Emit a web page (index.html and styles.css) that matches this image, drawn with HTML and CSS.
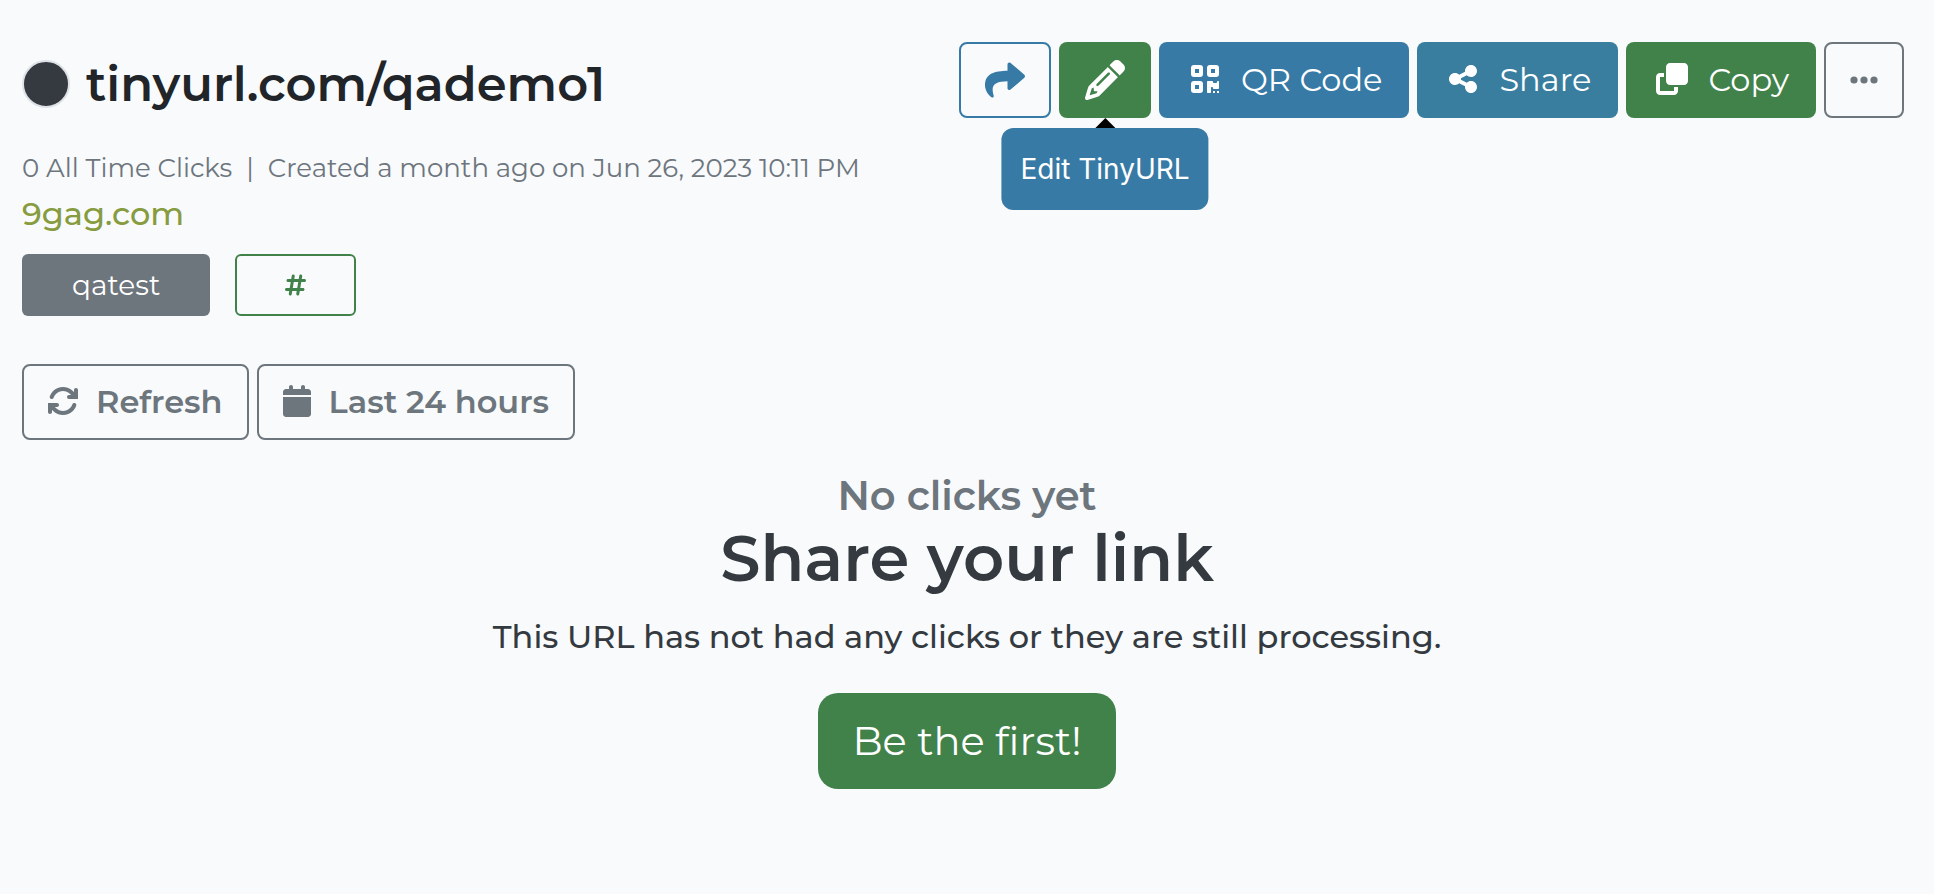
FILE: index.html
```html
<!doctype html>
<html lang="en">
  <head>
    <meta charset="utf-8">
    <meta name="viewport" content="width=device-width, initial-scale=1">
    <title>tinyurl.com/qademo1</title>
    <link rel="stylesheet" href="styles.css">
  </head>
  <body>
    <header class="link-header">
      <h1 class="link-title"><span class="dot"></span>tinyurl.com/qademo1</h1>
      <div class="actions">
        <button type="button" class="btn btn-outline-blue btn-icon" aria-label="Open link">
          <svg class="icon-lg" viewBox="0 0 512 512"><path d="M503.691 189.836L327.687 37.851C312.281 24.546 288 35.347 288 56.015v80.053C127.371 137.907 0 170.1 0 322.326c0 61.441 39.581 122.309 83.333 154.132 13.653 9.931 33.111-2.533 28.077-18.631C66.066 312.814 132.917 274.316 288 272.085V360c0 20.7 24.3 31.453 39.687 18.164l176.004-152c11.071-9.562 11.086-26.753 0-36.328z"/></svg>
        </button>
        <div class="tooltip-anchor">
          <button type="button" class="btn btn-green btn-icon" aria-label="Edit" aria-describedby="editTip">
            <svg class="icon-lg" viewBox="0 0 512 512"><path d="M410.3 231l11.3-11.3-33.9-33.9-62.1-62.1L291.7 89.8l-11.3 11.3-22.6 22.6L58.6 322.9c-10.4 10.4-18 23.3-22.2 37.4L1 480.7c-2.5 8.4-.2 17.5 6.1 23.7s15.3 8.5 23.7 6.1l120.3-35.4c14.1-4.2 27-11.8 37.4-22.2L387.7 253.7 410.3 231zM160 399.4l-9.1 22.7c-4 3.1-8.5 5.4-13.3 6.9L59.4 452l23-78.1c1.4-4.9 3.8-9.4 6.9-13.3l22.7-9.1v32c0 8.8 7.2 16 16 16h32zM362.7 18.7L348.3 33.2 325.7 55.8 314.3 67.1l33.9 33.9 62.1 62.1 33.9 33.9 11.3-11.3 22.6-22.6 14.5-14.5c25-25 25-65.5 0-90.5L453.3 18.7c-25-25-65.5-25-90.5 0zm-47.4 168l-144 144c-6.2 6.2-16.4 6.2-22.6 0s-6.2-16.4 0-22.6l144-144c6.2-6.2 16.4-6.2 22.6 0s6.2 16.4 0 22.6z"/></svg>
          </button>
          <div class="tooltip" id="editTip" role="tooltip">Edit TinyURL</div>
        </div>
        <button type="button" class="btn btn-blue btn-wide">
          <svg class="icon-fixed" viewBox="0 0 448 512"><path fill-rule="evenodd" d="M48 32h96a48 48 0 0 1 48 48v96a48 48 0 0 1-48 48H48a48 48 0 0 1-48-48V80a48 48 0 0 1 48-48zM64 96v64h64V96zM304 32h96a48 48 0 0 1 48 48v96a48 48 0 0 1-48 48h-96a48 48 0 0 1-48-48V80a48 48 0 0 1 48-48zM320 96v64h64V96zM48 288h96a48 48 0 0 1 48 48v96a48 48 0 0 1-48 48H48a48 48 0 0 1-48-48v-96a48 48 0 0 1 48-48zM64 352v64h64v-64zM256 304c0-8.800 7.200-16 16-16h64c8.800 0 16 7.200 16 16s7.200 16 16 16h32c8.800 0 16-7.200 16-16s7.200-16 16-16 16 7.200 16 16v96c0 8.800-7.200 16-16 16h-64c-8.800 0-16-7.200-16-16s-7.200-16-16-16-16 7.200-16 16v64c0 8.800-7.200 16-16 16h-32c-8.800 0-16-7.200-16-16V304zM352 448h32v32h-32zM416 448h32v32h-32z"/></svg>
          QR Code
        </button>
        <button type="button" class="btn btn-teal btn-wide">
          <svg class="icon-fixed" viewBox="0 0 448 512"><path d="M352 224c53 0 96-43 96-96s-43-96-96-96s-96 43-96 96c0 4 .2 8 .7 11.9l-94.1 47C145.400 170.200 121.900 160 96 160c-53 0-96 43-96 96s43 96 96 96c25.900 0 49.400-10.200 66.600-26.900l94.100 47c-.5 3.900-.7 7.800-.7 11.900c0 53 43 96 96 96s96-43 96-96s-43-96-96-96c-25.900 0-49.400 10.200-66.600 26.900l-94.100-47c.5-3.900 .7-7.800 .7-11.900s-.2-8-.7-11.900l94.100-47C302.600 213.800 326.100 224 352 224z"/></svg>
          Share
        </button>
        <button type="button" class="btn btn-green btn-wide">
          <svg class="icon-fixed" viewBox="0 0 512 512"><path d="M288 448H64V224h64V160H64c-35.3 0-64 28.7-64 64V448c0 35.3 28.7 64 64 64H288c35.3 0 64-28.7 64-64V384H288v64zm-64-96H448c35.3 0 64-28.7 64-64V64c0-35.3-28.7-64-64-64H224c-35.3 0-64 28.7-64 64V288c0 35.3 28.7 64 64 64z"/></svg>
          Copy
        </button>
        <button type="button" class="btn btn-outline-gray btn-more" aria-label="More">
          <svg class="icon-dots" viewBox="0 0 28 8"><circle cx="4" cy="4" r="3.600"/><circle cx="14" cy="4" r="3.600"/><circle cx="24" cy="4" r="3.600"/></svg>
        </button>
      </div>
    </header>

    <main>
      <p class="meta"><span>0 All Time Clicks</span><span>|</span><span>Created a month ago on Jun 26, 2023 10:11 PM</span></p>
      <a class="target" href="#">9gag.com</a>

      <div class="tags">
        <button type="button" class="tag tag-filled">qatest</button>
        <button type="button" class="tag tag-add" aria-label="Add tag">
          <svg class="icon-hash" viewBox="0 0 448 512"><path d="M181.300 32.400c17.400 2.900 29.200 19.400 26.300 36.800L197.800 128h95.100l11.500-69.300c2.900-17.400 19.400-29.200 36.800-26.300s29.200 19.400 26.300 36.800L357.800 128H416c17.700 0 32 14.300 32 32s-14.300 32-32 32H347.100L325.800 320H384c17.700 0 32 14.300 32 32s-14.300 32-32 32H315.100l-11.500 69.300c-2.900 17.400-19.400 29.200-36.800 26.300s-29.200-19.400-26.300-36.800l9.800-58.700H155.100l-11.500 69.300c-2.900 17.400-19.400 29.200-36.800 26.300s-29.200-19.400-26.300-36.800L90.200 384H32c-17.700 0-32-14.300-32-32s14.300-32 32-32h68.900l21.300-128H64c-17.700 0-32-14.300-32-32s14.300-32 32-32h68.900l11.500-69.300c2.900-17.400 19.400-29.200 36.800-26.300zM187.100 192L165.800 320h95.100l21.300-128H187.100z"/></svg>
        </button>
      </div>

      <div class="filters">
        <button type="button" class="btn btn-outline-gray btn-filter">
          <svg class="icon-refresh" viewBox="16 0 480 512"><path d="M105.1 202.6c7.7-21.8 20.2-42.3 37.8-59.8c62.5-62.5 163.8-62.5 226.3 0L386.3 160H352c-17.7 0-32 14.3-32 32s14.3 32 32 32H496V80c0-17.7-14.3-32-32-32s-32 14.3-32 32v35.200L414.400 97.600c-87.5-87.5-229.300-87.500-316.800 0C73.200 122 55.600 150.700 44.800 181.400c-5.900 16.700 2.900 34.900 19.500 40.800s34.900-2.900 40.800-19.500zM16 288V432c0 17.700 14.300 32 32 32s32-14.300 32-32V396.900l17.600 17.500c87.500 87.400 229.300 87.400 316.700 0c24.400-24.400 42.100-53.100 52.900-83.700c5.900-16.700-2.900-34.900-19.500-40.800s-34.900 2.900-40.800 19.500c-7.700 21.800-20.200 42.300-37.800 59.800c-62.500 62.500-163.800 62.500-226.300 0L125.600 352H160c17.700 0 32-14.300 32-32s-14.300-32-32-32H16z"/></svg>
          Refresh
        </button>
        <button type="button" class="btn btn-outline-gray btn-filter">
          <svg class="icon-calendar" viewBox="0 0 448 512"><path d="M96 32V64H48C21.5 64 0 85.5 0 112v48H448V112c0-26.5-21.5-48-48-48H352V32c0-17.7-14.3-32-32-32s-32 14.3-32 32V64H160V32c0-17.7-14.3-32-32-32S96 14.3 96 32zM448 192H0V464c0 26.5 21.5 48 48 48H400c26.5 0 48-21.5 48-48V192z"/></svg>
          Last 24 hours
        </button>
      </div>

      <section class="empty">
        <h3 class="empty-status">No clicks yet</h3>
        <h2 class="empty-title">Share your link</h2>
        <p class="empty-text">This URL has not had any clicks or they are still processing.</p>
        <button type="button" class="btn-first">Be the first!</button>
      </section>
    </main>
  </body>
</html>
```

FILE: styles.css
```css
* {
  box-sizing: border-box;
}

body {
  margin: 0;
  padding: 42px 22px;
  background-color: #f8fafc;
  color: #343a3f;
  font-family: Montserrat, Inter, sans-serif;
}

h1,
h2,
h3,
p {
  margin: 0;
}

button {
  font-family: inherit;
  cursor: pointer;
}

svg {
  display: block;
  flex: none;
  fill: currentColor;
}

.link-header {
  display: flex;
  justify-content: space-between;
  padding-right: 8px;
}

.link-title {
  display: flex;
  align-items: center;
  gap: 16px;
  padding-top: 8px;
  color: #212529;
  font-size: 48px;
  font-weight: 600;
  line-height: 66px;
}

.dot {
  width: 48px;
  height: 48px;
  border: 2px solid #dee2e6;
  border-radius: 50%;
  background-color: #343a3f;
}

.actions,
.filters {
  display: flex;
  gap: 8px;
}

/* Buttons */
.btn {
  display: flex;
  align-items: center;
  justify-content: center;
  height: 76px;
  border: 2px solid transparent;
  border-radius: 8px;
  color: #fff;
  font-size: 32px;
  white-space: nowrap;
}

.btn-icon {
  width: 92px;
  padding: 0;
}

.btn-wide {
  gap: 16px;
  padding: 0 25px 2px 24px;
}

.btn-more {
  width: 80px;
  padding: 0;
}

.btn-filter {
  gap: 18px;
  padding: 0 24px 2px;
  font-weight: 600;
}

.btn-blue {
  background-color: #377aa5;
}

.btn-teal {
  background-color: #397e9f;
}

.btn-green {
  background-color: #41824b;
}

.btn-outline-blue {
  border-color: #377aa5;
  background-color: transparent;
  color: #377aa5;
}

.btn-outline-gray {
  border-color: #6d757d;
  background-color: transparent;
  color: #6d757d;
}

/* Icons */
.icon-fixed {
  width: 40px;
  height: 32px;
}

.icon-lg {
  width: 40px;
  height: 40px;
}

.icon-refresh {
  width: 30px;
  height: 32px;
}

.icon-calendar {
  width: 28px;
  height: 32px;
}

.icon-dots {
  width: 28px;
  height: 8px;
}

.icon-hash {
  width: 21px;
  height: 24px;
}

/* Tooltip under the edit button */
.tooltip-anchor {
  position: relative;
}

.tooltip {
  position: absolute;
  top: 100%;
  left: 50%;
  margin-top: 10px;
  padding: 16px 19px;
  transform: translateX(-50%);
  border-radius: 12px;
  background-color: #377aa5;
  color: #fff;
  font-family: Inter, sans-serif;
  font-size: 28px;
  line-height: 50px;
  white-space: nowrap;
}

.tooltip::before {
  content: "";
  position: absolute;
  bottom: 100%;
  left: 50%;
  margin-left: -10px;
  border: 10px solid transparent;
  border-top: 0;
  border-bottom-color: #000;
}

/* Link details */
.meta {
  display: flex;
  gap: 14px;
  margin-top: 30px;
  color: #6d757d;
  font-size: 26px;
  line-height: 40px;
}

.target {
  display: block;
  width: fit-content;
  margin-top: 2px;
  color: #869c3f;
  font-size: 32px;
  font-weight: 500;
  line-height: 48px;
  text-decoration: none;
}

.tags {
  display: flex;
  gap: 25px;
  margin-top: 16px;
}

.tag {
  display: flex;
  align-items: center;
  height: 62px;
  padding: 0 48px;
  border: 2px solid transparent;
  border-radius: 6px;
  font-size: 28px;
}

.tag-filled {
  background-color: #6d757d;
  color: #fff;
}

.tag-add {
  border-color: #41824b;
  background-color: transparent;
  color: #41824b;
}

.filters {
  margin-top: 48px;
}

/* Empty state */
.empty {
  display: flex;
  flex-direction: column;
  align-items: center;
  margin-top: 32px;
  text-align: center;
}

.empty-status {
  color: #6d757d;
  font-size: 40px;
  font-weight: 600;
  line-height: 48px;
}

.empty-title {
  font-size: 64px;
  font-weight: 600;
  line-height: 76px;
}

.empty-text {
  margin-top: 21px;
  font-size: 32px;
  font-weight: 500;
  line-height: 40px;
}

.btn-first {
  height: 96px;
  margin-top: 36px;
  padding: 0 34px 2px;
  border: 0;
  border-radius: 20px;
  background-color: #41824b;
  color: #fff;
  font-size: 40px;
}
```
